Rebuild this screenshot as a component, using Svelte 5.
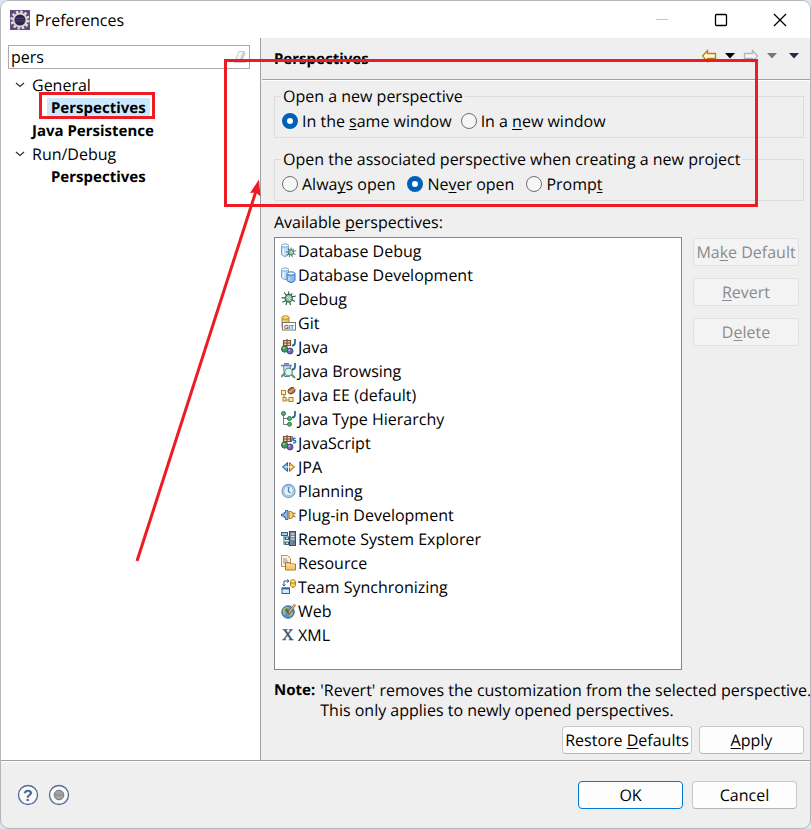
<script>
  const tree = [
    {
      label: 'General',
      children: [{ label: 'Perspectives', selected: true }]
    },
    { label: 'Java Persistence', match: true },
    {
      label: 'Run/Debug',
      children: [{ label: 'Perspectives' }]
    }
  ];

  const bug = (x, y, s) => `<g transform="translate(${x} ${y}) scale(${s})">
    <path d="M3 1l3 4M8 0v4M12 2l-2 3M0 7h5M11 6l5-1M1 12l4-2M11 9l4 2M5 15l1-4M10 15l-1-4" stroke="#2f5d57" stroke-width="1.3" fill="none"/>
    <ellipse cx="8" cy="7.5" rx="4" ry="4.3" fill="#8cc49a" stroke="#2d655c" stroke-width="1.2"/>
    <path d="M6 6l4 4M8 5l2 3" stroke="#e0f2c4"/></g>`;
  const cylinder = (x, y, w, h, fill, line, lid = '#eef6ff') => `
    <path d="M${x} ${y + 2}v${h - 4}q${w / 2} 4 ${w} 0v${4 - h}" fill="${fill}" stroke="${line}"/>
    <ellipse cx="${x + w / 2}" cy="${y + 2}" rx="${w / 2}" ry="1.7" fill="${lid}" stroke="${line}"/>
    <path d="M${x + 2} ${y + 5}v${h - 7}" stroke="#fff" stroke-opacity=".8"/>`;
  const javaJ = '<path d="M14 0v3.500q0 3-3 3" fill="none" stroke="#2c6c9c" stroke-width="1.8"/>';
  const balls = `
    <path d="M2.500 1.500h7v5h-7zM2.500 4h7M6 0v7" fill="#f2cfa8" stroke="#7d4b32" stroke-width="1.2"/>
    <circle cx="3.7" cy="10" r="3.2" fill="#45965a" stroke="#2b6d42"/>
    <circle cx="3" cy="9" r="1.1" fill="#a6d6ac"/>
    <circle cx="9" cy="12" r="3" fill="#7562ad" stroke="#54428c"/>
    <circle cx="8.3" cy="11.2" r="1" fill="#c5bae5"/>`;

  const icons = {
    dbDebug: cylinder(0.5, 0.5, 7, 13, '#c3ddf5', '#7ba6d3') + bug(5, 4.5, 0.64),
    dbDev: cylinder(0.5, 0.5, 7, 12, '#c6dff6', '#7ba6d3') + cylinder(6, 4.5, 8, 11, '#8dbdf0', '#3674b8'),
    debug: bug(0.5, 0.5, 0.9),
    git:
      cylinder(1, 0.5, 7, 14, '#f3c33d', '#ba8520', '#ffe58a') +
      `<rect x="1.500" y="7.500" width="13" height="7.500" fill="#fff" stroke="#77777b"/>
      <text x="3" y="13.500" font-family="Liberation Sans" font-weight="700" font-size="6"><tspan fill="#555">G</tspan><tspan fill="#d32626">I</tspan><tspan fill="#25853b">T</tspan></text>`,
    java: balls + javaJ,
    browsing:
      `<path d="M2.500 2.500h7l-1 11h-5z" fill="#dbe8f7" stroke="#5078b8"/>
      <path d="M0 2.500h11M3 .8h5" stroke="#5f80c0" stroke-width="1.4"/>
      <path d="M0 14l4-4M10.500 11.500l3.500 3.500" stroke="#6f8b77" stroke-width="2"/>
      <circle cx="7.500" cy="9" r="3.8" fill="#e8f4e8" stroke="#5c9783" stroke-width="1.2"/>` + javaJ,
    javaee: `
      <path d="M3 7v6h6" fill="none" stroke="#827144"/>
      <rect x=".5" y="3.5" width="4" height="4" fill="#fff0b4" stroke="#b88222"/>
      <rect x="2" y="10.5" width="3" height="3.500" fill="#ffe99c" stroke="#b88222"/>
      <rect x="8" y="10.5" width="4" height="4" fill="#ffe99c" stroke="#b88222"/>
      <ellipse cx="10.500" cy="3.700" rx="3.600" ry="2.800" transform="rotate(-32 10.500 3.700)" fill="#ad754b" stroke="#754422"/>
      <path d="M8 5q2 0 3-1.5t3-2" fill="none" stroke="#f1d1a8"/>`,
    hierarchy:
      `<path d="M2.5 3v10.5h6M3 7.5h5" fill="none" stroke="#69817a"/>
      <circle cx="2.5" cy="2.5" r="2" fill="#5bb278" stroke="#25794a"/>
      <circle cx="8.5" cy="7.5" r="2" fill="#5bb278" stroke="#25794a"/>
      <circle cx="8.5" cy="13.2" r="2" fill="#5bb278" stroke="#25794a"/>` + javaJ,
    javascript:
      balls +
      `<path d="M11 1v3.500q0 2-2 2M14.700 3.500q-2.300-1-2.300.8t1.300 1.200q1.500.3 1 1.500t-2.700.8" fill="none" stroke="#2e64a1" stroke-width="1.300"/>`,
    jpa: `
      <path d="M6.500 3.500v9L1.500 8z" fill="#70a9d6" stroke="#276495"/>
      <path d="M8.500 3.500v9l5-4.500z" fill="#f2bf58" stroke="#a7661b"/>
      <path d="M4 8h7" stroke="#fff" stroke-width="1.200"/>`,
    planning: `
      <circle cx="7.500" cy="8" r="6.5" fill="#c5ddf2" stroke="#7da4cb" stroke-width="1.3"/>
      <circle cx="7.500" cy="8" r="4.800" fill="#e4f1fb" stroke="#97bbdc"/>
      <path d="M7.500 4v4.500l2 1.500" fill="none" stroke="#4f7fad" stroke-width="1.300"/>`,
    plugin: `
      <path d="M0 8h3M11 6.500h3.500M11 9.500h3.500" stroke="#a98347" stroke-width="1.500"/>
      <path d="M.5 7h2.500V5.500h1.500V3.500h2.500v9H4.500v-2H3V9H.5z" fill="#8db6e8" stroke="#41699f"/>
      <path d="M8 4.500h2l2 1.500v4l-2 1.500H8z" fill="#f7d476" stroke="#b07924"/>`,
    remote: `
      <path d="M3 4v10M3 7h4M3 12h4" stroke="#356e85" fill="none"/>
      <rect x=".5" y="1.500" width="6" height="3" fill="#a5d2de" stroke="#35617c"/>
      <rect x="4.500" y="6" width="3" height="2.500" fill="#c4e8ed" stroke="#35617c"/>
      <rect x="4.500" y="11" width="3" height="2.500" fill="#c4e8ed" stroke="#35617c"/>
      <rect x="8.500" y=".5" width="6" height="14" fill="#77869f" stroke="#3b4865"/>
      <path d="M10 3h3.500M10 5.500h3.500M10 8h3.500" stroke="#dce7f0"/>
      <rect x="12" y="10.500" width="1.500" height="2" fill="#4267bb"/>`,
    resource: `
      <path d="M.5.5h6l3 3v8h-9z" fill="#fff7da" stroke="#ac9361"/>
      <path d="M2 4h4M2 6h5M2 8h3" stroke="#8394ac"/>
      <path d="M4.500 7.500h4l1 1.500h5v6h-10z" fill="#f8c770" stroke="#b47729"/>
      <path d="M5.500 10h8" stroke="#ffecb6"/>`,
    team: `
      <path d="M3 7V2h5M6 .5l2 1.500-2 1.500M1.500 5.500L3 7l1.500-1.500" fill="none" stroke="#355989"/>
      <rect x="1" y="9" width="7.500" height="5.500" fill="#d7edfa" stroke="#24649b"/>
      <path d="M1 9.500h7.500" stroke="#24649b" stroke-width="1.800"/>` + cylinder(9.5, 0.5, 5, 8, '#f4cd42', '#b1831b', '#ffe58a'),
    web: `
      <circle cx="7" cy="9" r="6.200" fill="#588fce" stroke="#38608e"/>
      <path d="M2 6q3-3 6-2l-1 3-3 1 1 3-2 1q-2-2-1-6M8 9l3-1 1 3-3 3-2-3z" fill="#8ac078"/>
      <path d="M5 6l3 4 6-8.500" fill="none" stroke="#835735" stroke-width="2.400"/>
      <path d="M8 9.500l6-8" stroke="#efd29d" stroke-width="1.200"/>`,
    xml: `<text x="1" y="13" font-family="Liberation Serif" font-size="16" fill="#34506f" stroke="#34506f" stroke-width=".4">X</text>`
  };

  const perspectives = [
    ['dbDebug', 'Database Debug'],
    ['dbDev', 'Database Development'],
    ['debug', 'Debug'],
    ['git', 'Git'],
    ['java', 'Java'],
    ['browsing', 'Java Browsing'],
    ['javaee', 'Java EE (default)'],
    ['hierarchy', 'Java Type Hierarchy'],
    ['javascript', 'JavaScript'],
    ['jpa', 'JPA'],
    ['planning', 'Planning'],
    ['plugin', 'Plug-in Development'],
    ['remote', 'Remote System Explorer'],
    ['resource', 'Resource'],
    ['team', 'Team Synchronizing'],
    ['web', 'Web'],
    ['xml', 'XML']
  ];

  let filter = $state('pers');
  let openIn = $state('same');
  let openAssociated = $state('never');
</script>

<div class="dialog">
  <header class="titlebar">
    <svg class="app-icon" width="20" height="20" viewBox="0 0 20 20" aria-hidden="true">
      <rect width="20" height="20" fill="#5d4a85" />
      <circle cx="10" cy="10" r="8.400" fill="none" stroke="#e7e2dd" stroke-width="2.400" stroke-dasharray="2.400 1.998" />
      <circle cx="10" cy="10" r="6.600" fill="#2b2748" stroke="#dcd6d6" stroke-width="2" />
      <path d="M5 8.500h10M5 11h10" stroke="#4a4070" />
    </svg>
    <h1>Preferences</h1>
    <div class="window-buttons">
      <button aria-label="Minimize" disabled>
        <svg width="14" height="14" viewBox="0 0 14 14"><path d="M1 6.500h12" stroke="#c6c6c6" /></svg>
      </button>
      <button aria-label="Maximize">
        <svg width="14" height="14" viewBox="0 0 14 14"><rect x="1.500" y="1.500" width="11" height="11" rx="1" fill="none" stroke="#000" stroke-width="1.300" /></svg>
      </button>
      <button aria-label="Close">
        <svg width="14" height="14" viewBox="0 0 14 14"><path d="M1 1l12 12M13 1L1 13" stroke="#000" stroke-width="1.300" /></svg>
      </button>
    </div>
  </header>

  <div class="body">
    <nav class="sidebar" aria-label="Preference pages">
      <div class="search">
        <input type="text" aria-label="Filter text" bind:value={filter} />
        <button aria-label="Clear" onclick={() => (filter = '')}>
          <svg width="14" height="14" viewBox="0 0 14 14">
            <path d="M6 1.500h5l-3.500 8h-5z" fill="#f5f5f5" stroke="#c8c8c8" />
            <path d="M11 1.500l1 2-3.500 8h-6v-2h5zM1 12.500h12" fill="#d8d8d8" stroke="#c8c8c8" />
          </svg>
        </button>
      </div>
      <ul class="tree">
        {#each tree as node}
          <li>
            <div class="row">
              {#if node.children}
                <button class="twisty" aria-label="Collapse {node.label}">
                  <svg width="10" height="6" viewBox="0 0 10 6"><path d="M1 1l4 3.500L9 1" fill="none" stroke="#333" stroke-width="1.300" /></svg>
                </button>
              {/if}
              <a href="#page" class:match={node.match}>{node.label}</a>
            </div>
            {#if node.children}
              <ul>
                {#each node.children as child}
                  <li class="row"><a href="#page" class="match child" class:selected={child.selected}>{child.label}</a></li>
                {/each}
              </ul>
            {/if}
          </li>
        {/each}
      </ul>
    </nav>

    <main>
      <div class="page-head">
        <h2>Perspectives</h2>
        <div class="history">
          <button aria-label="Back">
            <svg width="16" height="14" viewBox="0 0 16 14"><path d="M1.500 7l5-5.500v3h8v5h-8v3z" fill="#fff6cf" stroke="#b87f1c" stroke-width="1.300" /></svg>
          </button>
          <button aria-label="Back history">
            <svg width="10" height="6" viewBox="0 0 10 6"><path d="M0 0h10L5 5.500z" fill="#000" /></svg>
          </button>
          <button aria-label="Forward" disabled>
            <svg width="16" height="14" viewBox="0 0 16 14"><path d="M14.500 7l-5-5.500v3h-8v5h8v3z" fill="#f6f6f6" stroke="#b5b5b5" stroke-width="1.300" /></svg>
          </button>
          <button aria-label="Forward history" disabled>
            <svg width="10" height="6" viewBox="0 0 10 6"><path d="M0 0h10L5 5.500z" fill="#777" /></svg>
          </button>
          <button aria-label="Menu" class="menu">
            <svg width="10" height="6" viewBox="0 0 10 6"><path d="M0 0h10L5 5.500z" fill="#38214f" /></svg>
          </button>
        </div>
      </div>

      <div class="page">
        <fieldset>
          <legend>Open a new perspective</legend>
          <div class="radios">
            <label><input type="radio" value="same" bind:group={openIn} /><span>In the <u>s</u>ame window</span></label>
            <label><input type="radio" value="new" bind:group={openIn} /><span>In a <u>n</u>ew window</span></label>
          </div>
        </fieldset>
        <fieldset>
          <legend>Open the associated perspective when creating a new project</legend>
          <div class="radios wide">
            <label><input type="radio" value="always" bind:group={openAssociated} /><span>Alwa<u>y</u>s open</span></label>
            <label><input type="radio" value="never" bind:group={openAssociated} /><span>Ne<u>v</u>er open</span></label>
            <label><input type="radio" value="prompt" bind:group={openAssociated} /><span>Promp<u>t</u></span></label>
          </div>
        </fieldset>

        <div class="list-label" id="available">Available <u>p</u>erspectives:</div>
        <div class="list-area">
          <ul class="list" aria-labelledby="available">
            {#each perspectives as [icon, name]}
              <li>
                <svg width="16" height="16" viewBox="0 0 16 16" aria-hidden="true">{@html icons[icon]}</svg>
                <span>{name}</span>
              </li>
            {/each}
          </ul>
          <div class="side-buttons">
            <button class="btn" disabled>Ma<u>k</u>e Default</button>
            <button class="btn" disabled><u>R</u>evert</button>
            <button class="btn" disabled>D<u>e</u>lete</button>
          </div>
        </div>

        <div class="note">
          <strong>Note:</strong>
          <p>'Revert' removes the customization from the selected perspective.<br />This only applies to newly opened perspectives.</p>
        </div>
        <div class="page-buttons">
          <button class="btn restore">Restore <u>D</u>efaults</button>
          <button class="btn"><u>A</u>pply</button>
        </div>
      </div>
    </main>
  </div>

  <footer>
    <button class="round" aria-label="Help">
      <svg width="22" height="22" viewBox="0 0 22 22">
        <circle cx="11" cy="11" r="9.500" fill="#f8f9fb" stroke="#526a93" stroke-width="1.300" />
        <text x="11" y="16.500" text-anchor="middle" font-family="Liberation Sans" font-weight="700" font-size="16" fill="#4b628e">?</text>
      </svg>
    </button>
    <button class="round" aria-label="Record">
      <svg width="22" height="22" viewBox="0 0 22 22">
        <circle cx="11" cy="11" r="9.500" fill="#f8f9fb" stroke="#526a93" stroke-width="1.300" />
        <circle cx="11" cy="11" r="4.800" fill="#a4a4a4" stroke="#777" />
        <path d="M6.500 11h9" stroke="#858585" />
      </svg>
    </button>
    <div class="footer-buttons">
      <button class="btn default">OK</button>
      <button class="btn">Cancel</button>
    </div>
  </footer>

  <svg class="annotations" width="811" height="829" viewBox="0 0 811 829" aria-hidden="true">
    <g fill="none" stroke="#ed1c24" stroke-width="3">
      <rect x="40.500" y="93.500" width="113" height="24" />
      <rect x="225.500" y="60.500" width="531" height="145" />
      <path d="M137 561L257 188" />
    </g>
    <path d="M259 179.500l1.500 17-4.500-4-6 .5z" fill="#ed1c24" />
  </svg>
</div>

<style>
  :global(body) {
    margin: 0;
    background: #dde5ef;
  }
  .dialog {
    position: relative;
    box-sizing: border-box;
    min-height: 100vh;
    display: flex;
    flex-direction: column;
    overflow: hidden;
    border: 1px solid #b4b6ba;
    border-radius: 9px;
    background: #efefef;
    color: #000;
    font: 16px/20px 'Open Sans', 'Noto Sans', sans-serif;
    text-rendering: geometricPrecision;
  }
  button,
  input {
    font: inherit;
    color: inherit;
  }
  button {
    padding: 0;
    border: 0;
    background: none;
    text-rendering: inherit;
  }
  svg {
    display: block;
  }
  ul {
    margin: 0;
    padding: 0;
    list-style: none;
  }
  u {
    text-underline-offset: 2px;
    text-decoration-thickness: 1px;
    text-decoration-skip-ink: none;
  }
  .titlebar {
    display: flex;
    align-items: center;
    height: 37px;
    padding-left: 9px;
    gap: 5px;
    background: #fff;
  }
  h1,
  h2 {
    margin: 0;
    font-size: 16px;
    font-weight: 400;
  }
  .window-buttons {
    display: flex;
    margin-left: auto;
    padding-right: 1px;
  }
  .window-buttons button {
    display: grid;
    place-items: center;
    width: 59px;
    height: 36px;
  }
  .body {
    flex: 1;
    display: flex;
  }
  .sidebar {
    flex: 0 0 260px;
    min-width: 0;
    box-sizing: border-box;
    padding: 7px 10px 0 7px;
    border-right: 1px solid #a0a0a0;
    background: #fff;
  }
  .search {
    display: flex;
    align-items: center;
    height: 22px;
    padding-right: 2px;
    border: 1px solid #a9abb0;
  }
  .search input {
    flex: 1;
    min-width: 0;
    padding: 0 2px;
    border: 0;
    outline: 0;
    background: none;
  }
  .tree {
    padding-top: 4px;
  }
  .row {
    display: flex;
    align-items: center;
    height: 23px;
    padding-left: 24px;
  }
  .twisty {
    margin-left: -18px;
    padding: 0 7px 0 1px;
  }
  .tree a {
    color: inherit;
    text-decoration: none;
  }
  .tree .match {
    font: 700 15px/20px 'Noto Sans', 'Open Sans', sans-serif;
  }
  .tree .child {
    margin-left: 15px;
    padding: 0 4px;
  }
  .selected {
    background: #cce8ff;
  }
  main {
    flex: 1;
    min-width: 0;
    display: flex;
    flex-direction: column;
    padding-left: 1px;
  }
  .page-head {
    display: flex;
    align-items: center;
    justify-content: space-between;
    height: 41px;
    padding: 0 11px 0 12px;
    border-bottom: 1px solid #a0a0a0;
    box-shadow: 0 1px #fff;
  }
  h2 {
    font: 700 15px/20px 'Noto Sans', 'Open Sans', sans-serif;
  }
  .history {
    display: flex;
    align-items: center;
    gap: 8px;
    padding-bottom: 5px;
  }
  .menu {
    padding-left: 4px;
  }
  .page {
    flex: 1;
    display: flex;
    flex-direction: column;
    padding: 6px 6px 6px 12px;
  }
  fieldset {
    min-width: 0;
    margin: 0 0 11px;
    padding: 5px 7px 6px;
    border: 1px solid #dcdcdc;
  }
  legend {
    margin-left: -1px;
    padding: 0 2px;
  }
  .radios {
    display: flex;
    gap: 9px;
  }
  .wide {
    gap: 12px;
  }
  label {
    display: flex;
    align-items: center;
    gap: 4px;
  }
  input[type='radio'] {
    appearance: none;
    box-sizing: border-box;
    width: 16px;
    height: 16px;
    margin: 0;
    border: 1px solid #707070;
    border-radius: 50%;
    background: #f6f6f6;
  }
  input[type='radio']:checked {
    border: 5px solid #005fb8;
    background: #fff;
  }
  .list-label {
    margin-bottom: 5px;
  }
  .list-area {
    flex: 1;
    display: flex;
    gap: 11px;
  }
  .list {
    flex: 1;
    padding: 1px 6px 22px;
    border: 1px solid #828790;
    background: #fff;
  }
  .list li {
    display: flex;
    align-items: center;
    gap: 1px;
    height: 24px;
  }
  .side-buttons {
    display: flex;
    flex-direction: column;
    gap: 12px;
    padding: 1px 5px 0 0;
  }
  .btn {
    box-sizing: border-box;
    width: 105px;
    height: 28px;
    border: 1px solid #c8c8c8;
    border-bottom-color: #b5b5b5;
    border-radius: 4px;
    background: #fdfdfd;
    white-space: nowrap;
  }
  .side-buttons .btn {
    width: 106px;
  }
  .btn:disabled {
    border-color: #e0e0e0;
    background: #f3f3f3;
    color: #8b8b8b;
  }
  .page-buttons .restore {
    width: 130px;
  }
  .default {
    border-color: #0078d4;
  }
  .note {
    display: flex;
    gap: 5px;
    padding-top: 10px;
    white-space: nowrap;
  }
  .note strong {
    font: 700 15px/20px 'Noto Sans', 'Open Sans', sans-serif;
  }
  .note p {
    margin: 0;
  }
  .page-buttons {
    display: flex;
    justify-content: flex-end;
    gap: 7px;
    padding-top: 6px;
  }
  footer {
    display: flex;
    align-items: center;
    gap: 9px;
    padding: 20px 13px 19px 16px;
    border-top: 1px solid #a0a0a0;
    box-shadow: inset 0 1px #fff;
  }
  .footer-buttons {
    display: flex;
    gap: 9px;
    margin-left: auto;
  }
  .annotations {
    position: absolute;
    left: -1px;
    top: -1px;
    pointer-events: none;
  }
</style>
